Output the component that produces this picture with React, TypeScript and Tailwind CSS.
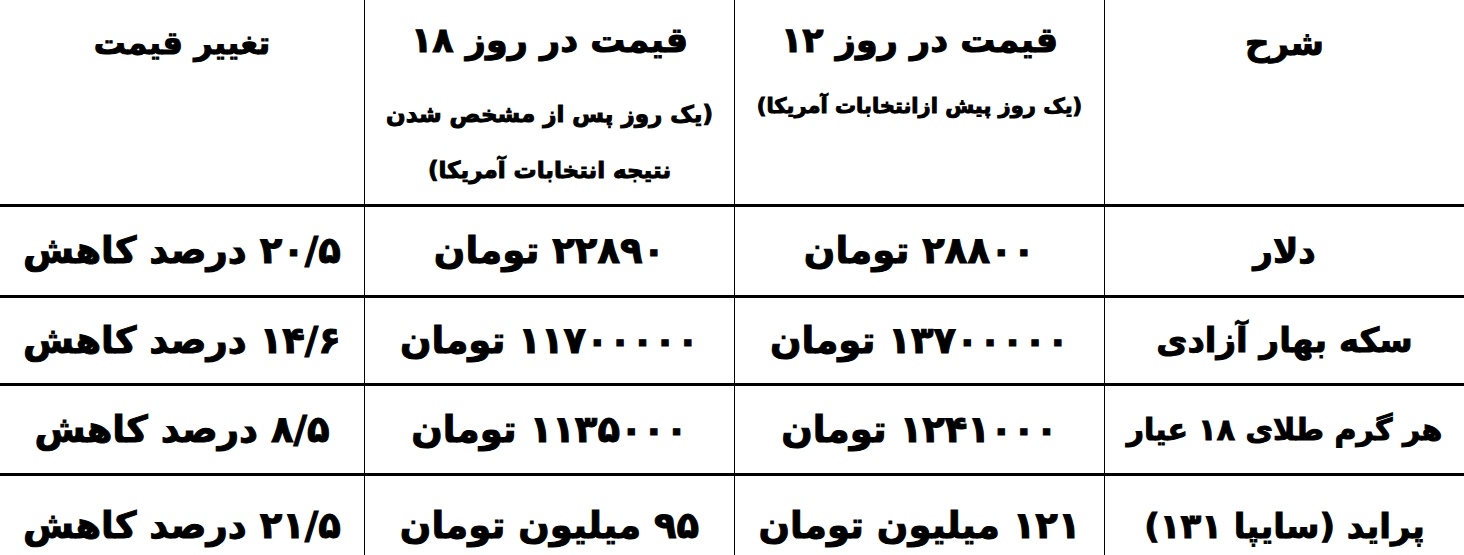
import React from 'react';

const font = { fontFamily: '"DejaVu Sans", sans-serif' };

type Row = {
  label: string;
  day12: string;
  day18: string;
  change: string;
  h: string;
  small?: boolean;
};

const rows: Row[] = [
  { label: 'دلار', day12: '۲۸۸۰۰ تومان', day18: '۲۲۸۹۰ تومان', change: '۲۰/۵ درصد کاهش', h: 'h-[91px]' },
  { label: 'سکه بهار آزادی', day12: '۱۳۷۰۰۰۰۰ تومان', day18: '۱۱۷۰۰۰۰۰ تومان', change: '۱۴/۶ درصد کاهش', h: 'h-[88px]' },
  { label: 'هر گرم طلای ۱۸ عیار', day12: '۱۲۴۱۰۰۰ تومان', day18: '۱۱۳۵۰۰۰ تومان', change: '۸/۵ درصد کاهش', h: 'h-[90px]', small: true },
  { label: 'پراید (سایپا ۱۳۱)', day12: '۱۲۱ میلیون تومان', day18: '۹۵ میلیون تومان', change: '۲۱/۵ درصد کاهش', h: 'h-[100px]' },
];

const cols = 'grid grid-cols-[360px_370px_370px_364px]';

export default function App() {
  return (
    <div
      dir="rtl"
      className="w-[1464px] h-[555px] overflow-hidden bg-white text-black font-bold [-webkit-text-stroke:1px_#000]"
      style={font}
    >
      {/* header */}
      <div className={`${cols} h-[207px] border-b-[3px] border-black`}>
        <div className="border-l border-black flex justify-center pt-[14px]">
          <span className="text-[34px] leading-[58px]">شرح</span>
        </div>
        <div className="border-l border-black flex flex-col items-center pt-[10px]">
          <span className="text-[35px] leading-[60px]">قیمت در روز ۱۲</span>
          <span className="text-[21px] leading-[40px] mt-[16px]">(یک روز پیش ازانتخابات آمریکا)</span>
        </div>
        <div className="border-l border-black flex flex-col items-center pt-[10px]">
          <span className="text-[35px] leading-[60px]">قیمت در روز ۱۸</span>
          <span className="text-[23px] leading-[56px] mt-[16px]">(یک روز پس از مشخص شدن</span>
          <span className="text-[23px] leading-[56px]">نتیجه انتخابات آمریکا)</span>
        </div>
        <div className="flex justify-center pt-[14px]">
          <span className="text-[32px] leading-[58px]">تغییر قیمت</span>
        </div>
      </div>

      {rows.map((r, i) => (
        <div key={i} className={`${cols} ${r.h} ${i < rows.length - 1 ? 'border-b-[3px] border-black' : ''}`}>
          <div className="border-l border-black flex items-center justify-center">
            <span className={r.small ? 'text-[30px]' : 'text-[34px]'}>{r.label}</span>
          </div>
          <div className="border-l border-black flex items-center justify-center">
            <span className="text-[37px]">{r.day12}</span>
          </div>
          <div className="border-l border-black flex items-center justify-center">
            <span className="text-[37px]">{r.day18}</span>
          </div>
          <div className="flex items-center justify-center">
            <span className="text-[37px]">{r.change}</span>
          </div>
        </div>
      ))}
    </div>
  );
}
